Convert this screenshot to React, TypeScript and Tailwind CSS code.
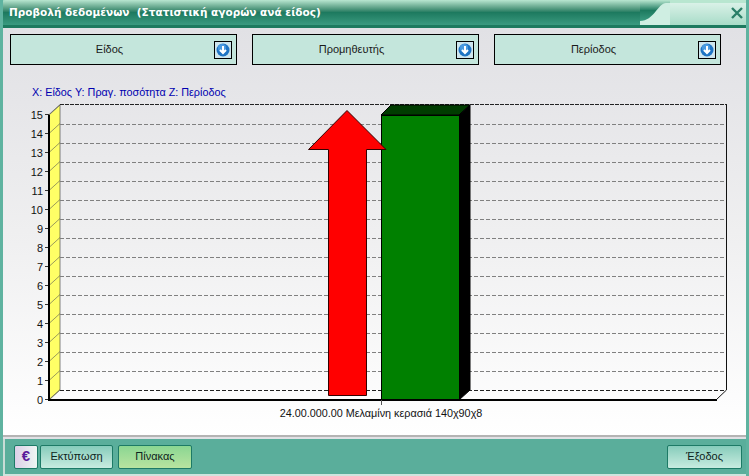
const grid = Array.from({ length: 15 }, (_, i) => 105 + i * 19);
const labels = Array.from({ length: 16 }, (_, i) => i);

function Selector({ label }: { label: string }) {
  return (
    <div className="relative flex h-[31px] w-[227px] items-center justify-center border border-black bg-[#c4e6dc] pr-[28px] text-[11px] text-[#1a1a1a]">
      <span>{label}</span>
      <span className="absolute right-[4px] top-[6px] flex h-[18px] w-[18px] items-center justify-center border border-black bg-[#cfe6ee]">
        <svg width="14" height="14" viewBox="0 0 14 14">
          <circle cx="7" cy="7" r="6.5" fill="#1f74c4" />
          <circle cx="6" cy="5" r="4" fill="#4a9ae0" />
          <path d="M7 3v7M4 7l3 3 3-3" stroke="#fff" strokeWidth="2" fill="none" />
        </svg>
      </span>
    </div>
  );
}

function Btn({ label, cls }: { label: string; cls: string }) {
  return (
    <div className={`flex h-[24px] items-center justify-center rounded-[2px] border border-[#1d7a66] text-[11px] text-[#0c2420] ${cls}`}>
      {label}
    </div>
  );
}

function Chart() {
  return (
    <svg width="749" height="365" viewBox="0 70 749 365" className="block" style={{ fontFamily: "'Liberation Sans', sans-serif" }}>
      <text x="32" y="96" fontSize="10.8" fill="#0000b0">X: Είδος Y: Πραγ. ποσότητα Z: Περίοδος</text>
      <polygon points="49,115 60,105 60,390 49,400" fill="#ffff66" stroke="#333" strokeWidth="0.6" />
      <line x1="726.5" y1="104" x2="726.5" y2="390" stroke="#111" />
      <line x1="726.5" y1="390" x2="716" y2="400" stroke="#111" />
      <line x1="60" y1="104.5" x2="726.5" y2="104.5" stroke="#222" strokeDasharray="4 1" />
      {grid.slice(1).map((y) => (
        <line key={y} x1="60" y1={y + 0.5} x2="726" y2={y + 0.5} stroke="#808080" strokeDasharray="4 2" />
      ))}
      <line x1="60" y1="390.5" x2="726" y2="390.5" stroke="#222" strokeDasharray="4 2" />
      {labels.map((n) => {
        const y = 400 - n * 19;
        return (
          <g key={n}>
            <line x1="45" y1={y - 0.5} x2="49" y2={y - 0.5} stroke="#333" />
            <line x1="49" y1={y - 0.5} x2="60" y2={y - 10.5} stroke="#555" strokeWidth="0.6" />
            <text x="43" y={y + 4} fontSize="11" textAnchor="end" fill="#111">{n}</text>
          </g>
        );
      })}
      <line x1="49" y1="115" x2="49" y2="401" stroke="#000" strokeWidth="2" />
      <line x1="48" y1="400" x2="717" y2="400" stroke="#000" strokeWidth="2" />
      <line x1="381.5" y1="400" x2="381.5" y2="405" stroke="#555" />
      <polygon points="381,115 391,105 470,105 459,115" fill="#003c00" stroke="#000" />
      <polygon points="459,115 470,105 470,390 459,400" fill="#000" stroke="#000" />
      <rect x="381.5" y="115.5" width="78" height="284" fill="#008000" stroke="#000" />
      <polygon points="347,110.5 386,149.5 366.5,149.5 366.5,395.5 328.5,395.5 328.5,149.5 308.5,149.5" fill="#ff0000" stroke="#300" />
      <text x="381" y="417" fontSize="10.8" textAnchor="middle" fill="#111">24.00.000.00 Μελαμίνη κερασιά 140χ90χ8</text>
    </svg>
  );
}

export default function App() {
  return (
    <div className="flex h-[476px] w-[749px] flex-col overflow-hidden border-x-[3px] border-[#5fb3a0] bg-[#e1e1e5] font-['Liberation_Sans',sans-serif]">
      <div className="-mx-[3px] flex h-[28px] shrink-0 border-b-[3px] border-[#1d7a5f] bg-[#8fd0b8]">
        <div className="flex flex-1 items-center rounded-tl-[6px] bg-gradient-to-b from-[#b8e6d0] via-[#1d7a5f] to-[#3a9a80] pl-[9px] font-['DejaVu_Sans',sans-serif] text-[10.5px] font-bold text-white">
          Προβολή δεδομένων&nbsp;&nbsp;(Στατιστική αγορών ανά είδος)
        </div>
        <svg width="30" height="25" viewBox="0 0 30 25" className="block shrink-0">
          <defs>
            <linearGradient id="d" x1="0" y1="0" x2="0" y2="1">
              <stop offset="0" stopColor="#b8e6d0" />
              <stop offset="0.5" stopColor="#1d7a5f" />
              <stop offset="1" stopColor="#3a9a80" />
            </linearGradient>
          </defs>
          <rect width="30" height="25" fill="#cfeee2" />
          <path d="M0 0H30V3H26C18 3 14 21 0 21Z" fill="url(#d)" />
        </svg>
        <div className="relative flex w-[79px] items-center justify-end bg-gradient-to-b from-[#e0f4ec] to-[#a8dcc8] pr-[5px]">
          <div className="absolute left-0 right-0 top-0 h-[3px] bg-[#b8e6d0]" />
          <svg width="14" height="14" viewBox="0 0 14 14">
            <path d="M2 2l10 10M12 2L2 12" stroke="#2a7f68" strokeWidth="2.4" fill="none" />
          </svg>
        </div>
      </div>
      <div className="relative flex-1 bg-gradient-to-b from-[#e1e1e5] via-[#efeff0] to-white">
        <div className="ml-[7px] flex gap-[15px] pt-[6px]">
          <Selector label="Είδος" />
          <Selector label="Προμηθευτής" />
          <Selector label="Περίοδος" />
        </div>
        <div className="-ml-[3px] mt-[5px]">
          <Chart />
        </div>
      </div>
      <div className="shrink-0 border-t-2 border-[#b4b4b4] bg-[#e1e1e5] pt-[2px]">
        <div className="flex h-[35px] items-center border-l-2 border-[#c8dcd6] bg-[#5aae9b] pl-[9px] pr-[4px]">
          <div className="flex h-[24px] w-[24px] items-center justify-center rounded-[2px] border border-[#1d7a66] bg-gradient-to-r from-[#dcd0e8] to-[#eef6f2] text-[15px] font-bold text-[#5a1a9a]">€</div>
          <Btn label="Εκτύπωση" cls="ml-[2px] w-[73px] bg-gradient-to-b from-[#86ccbb] to-[#c8ece0]" />
          <Btn label="Πίνακας" cls="ml-[5px] w-[74px] bg-gradient-to-b from-[#8ad692] to-[#b8e4a0]" />
          <Btn label="Έξοδος" cls="ml-auto w-[75px] bg-gradient-to-b from-[#86ccbb] to-[#c8ece0]" />
        </div>
        <div className="h-[4px] border-b border-[#5fb3a0] bg-[#cfe5de]" />
      </div>
    </div>
  );
}
